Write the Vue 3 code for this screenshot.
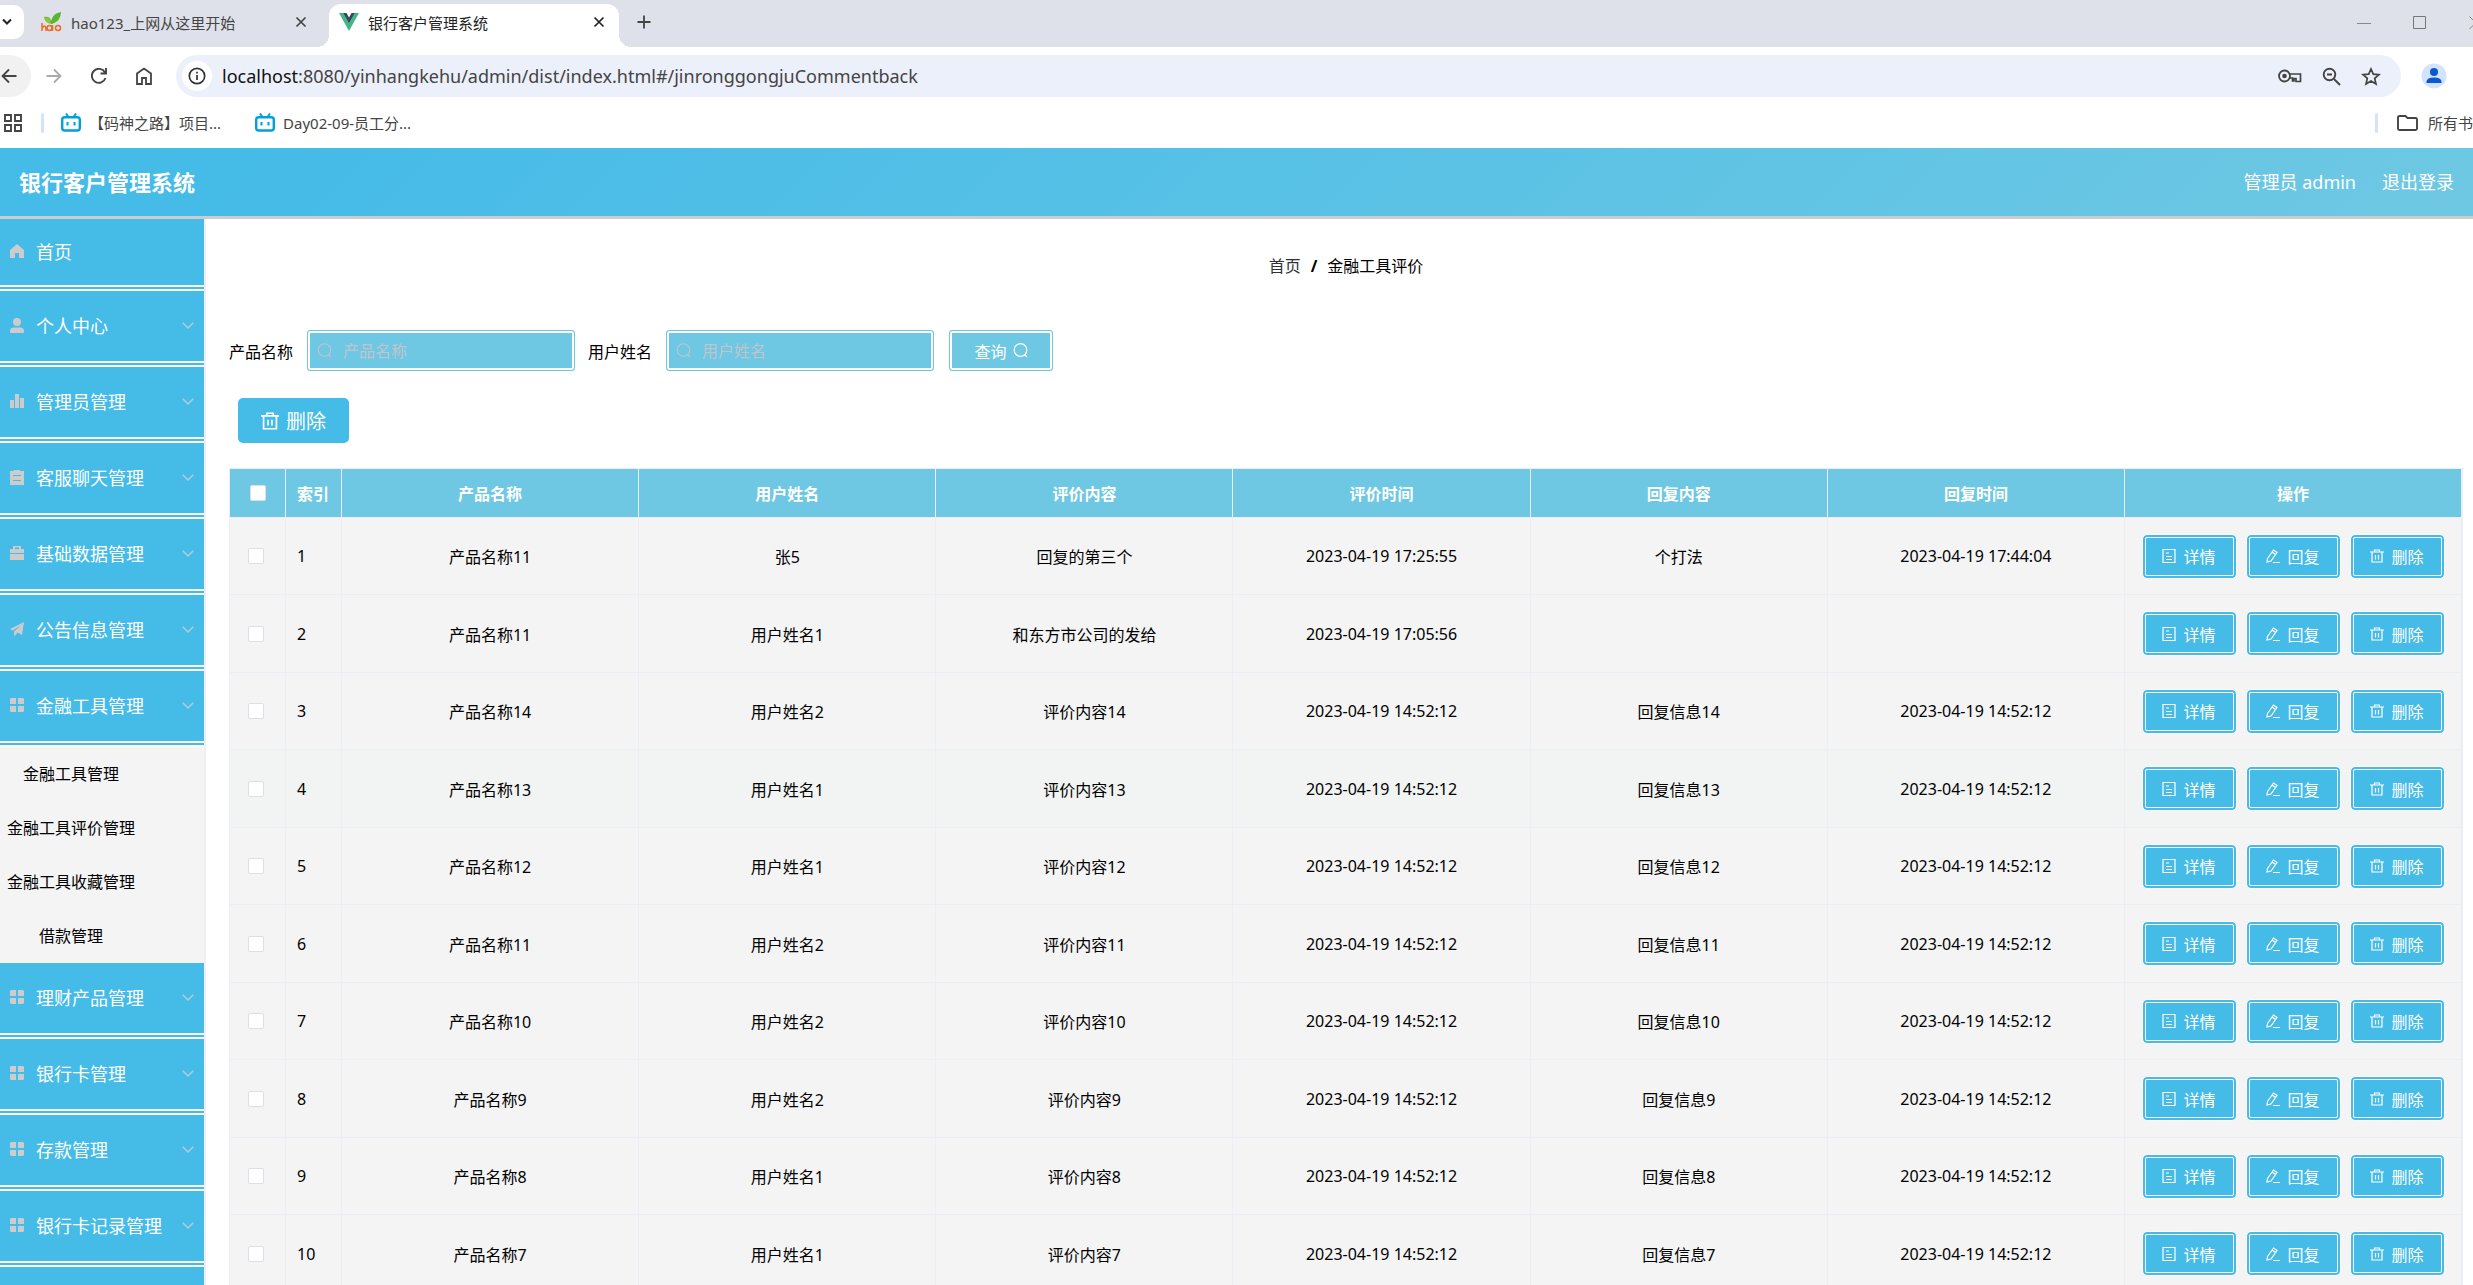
<script setup>
import { ref } from 'vue'

const menu = [
  { icon: 'home', label: '首页' },
  { icon: 'user', label: '个人中心', arrow: true },
  { icon: 'chart', label: '管理员管理', arrow: true },
  { icon: 'clipboard', label: '客服聊天管理', arrow: true },
  { icon: 'case', label: '基础数据管理', arrow: true },
  { icon: 'plane', label: '公告信息管理', arrow: true },
  {
    icon: 'grid',
    label: '金融工具管理',
    arrow: true,
    children: ['金融工具管理', '金融工具评价管理', '金融工具收藏管理', '借款管理']
  },
  { icon: 'grid', label: '理财产品管理', arrow: true },
  { icon: 'grid', label: '银行卡管理', arrow: true },
  { icon: 'grid', label: '存款管理', arrow: true },
  { icon: 'grid', label: '银行卡记录管理', arrow: true }
]

const menuIcons = {
  home: 'M7 0 14 6V14H9V9H5V14H0V6Z',
  user: 'M7 0a4 4 0 1 1 0 8a4 4 0 0 1 0-8ZM0 14V13Q0 9.500 4 9.500H10Q14 9.500 14 13V14Q14 15 13 15H1Q0 15 0 14Z',
  chart: 'M0 6H4V14H0ZM5 0H9V14H5ZM10 4H14V14H10Z',
  clipboard: 'M0 1H4V0H10V1H14V15H0ZM3 5V6H11V5ZM3 10V11H11V10Z',
  case: 'M3 3V0H11V3H14V7H0V3ZM5 3H9V1.500H5ZM0 8H14V14H0Z',
  plane: 'M14 0 12 13 7.500 10.500 4.500 14.500 4 9.500 11 3 3 8.500 0 7Z',
  grid: 'M1 0H6V6H0V1ZM8 0H13L14 1V6H8ZM0 8H6V14H1L0 13ZM8 8H14V13L13 14H8Z'
}

const columns = ['产品名称', '用户姓名', '评价内容', '评价时间', '回复内容', '回复时间']
const old = '2023-04-19 14:52:12'
const rows = [
  ['产品名称11', '张5', '回复的第三个', '2023-04-19 17:25:55', '个打法', '2023-04-19 17:44:04'],
  ['产品名称11', '用户姓名1', '和东方市公司的发给', '2023-04-19 17:05:56', '', ''],
  ['产品名称14', '用户姓名2', '评价内容14', old, '回复信息14', old],
  ['产品名称13', '用户姓名1', '评价内容13', old, '回复信息13', old],
  ['产品名称12', '用户姓名1', '评价内容12', old, '回复信息12', old],
  ['产品名称11', '用户姓名2', '评价内容11', old, '回复信息11', old],
  ['产品名称10', '用户姓名2', '评价内容10', old, '回复信息10', old],
  ['产品名称9', '用户姓名2', '评价内容9', old, '回复信息9', old],
  ['产品名称8', '用户姓名1', '评价内容8', old, '回复信息8', old],
  ['产品名称7', '用户姓名1', '评价内容7', old, '回复信息7', old]
]
const activeRow = 3

const actions = [
  { label: '详情', path: 'M1 0.500H13V13.500H1ZM4 4H7M4 7.500H10M4 10.500H10' },
  { label: '回复', path: 'M1.500 9.500 7.500 1 11 3.500 5 12 1 13ZM6 3 9.500 5.500M7 13.500H14' },
  { label: '删除', path: 'M0 3H14M4.500 3V1H9.500V3M2 3V13H12V3M5.500 6V10.500M8.500 6V10.500' }
]

const product = ref('')
const user = ref('')
</script>

<template>
  <div class="window">
    <div class="tabs">
      <button class="tab-search" aria-label="搜索标签页">
        <svg width="12" height="8" viewBox="0 0 12 8"><path d="M2 1.500 6 5.500 10 1.500" fill="none" stroke="#222" stroke-width="2" /></svg>
      </button>
      <div class="tab">
        <svg width="21" height="20" viewBox="0 0 21 20">
          <path d="M3 5Q9 4 10 9Q12 1 20 0Q20 9 11 12Q4 11 3 5Z" fill="#5ab531" />
          <path d="M3 5Q9 5 10 11Q5 11 3 5Z" fill="#8dc63f" />
          <path d="M1 11V19M1 16Q4 12 5 16V19M11 16a2.500 2.500 0 1 0-5 0a2.500 2.500 0 1 0 5 0M11.500 13V19M19.500 16a2.500 2.500 0 1 0-5 0a2.500 2.500 0 1 0 5 0" fill="none" stroke="#ee6b1f" stroke-width="1.500" />
        </svg>
        <span class="tab-title">hao123_上网从这里开始</span>
        <button class="close" aria-label="关闭">
          <svg width="12" height="12" viewBox="0 0 12 12"><path d="M1.500 1.500 10.500 10.500M10.500 1.500 1.500 10.500" stroke="#444" stroke-width="1.700" /></svg>
        </button>
      </div>
      <div class="tab active">
        <svg width="20" height="18" viewBox="0 0 20 18">
          <path d="M0 0H4L10 10.500 16 0H20L10 18Z" fill="#41b883" />
          <path d="M4 0H7.500L10 4.500 12.500 0H16L10 10.500Z" fill="#35495e" />
        </svg>
        <span class="tab-title">银行客户管理系统</span>
        <button class="close" aria-label="关闭">
          <svg width="12" height="12" viewBox="0 0 12 12"><path d="M1.500 1.500 10.500 10.500M10.500 1.500 1.500 10.500" stroke="#222" stroke-width="1.700" /></svg>
        </button>
      </div>
      <button class="new-tab" aria-label="新标签页">
        <svg width="14" height="14" viewBox="0 0 14 14"><path d="M7 0.500V13.500M0.500 7H13.500" stroke="#444" stroke-width="1.800" /></svg>
      </button>
      <div class="win-controls">
        <svg width="14" height="14" viewBox="0 0 14 14"><path d="M0 7.500H14" stroke="#888" /></svg>
        <svg width="14" height="14" viewBox="0 0 14 14"><path d="M0.500 0.500H12.500V12.500H0.500Z" fill="none" stroke="#777" /></svg>
        <svg width="14" height="14" viewBox="0 0 14 14"><path d="M0.500 0.500 13 13M13 0.500 0.500 13" stroke="#888" /></svg>
      </div>
    </div>

    <div class="toolbar">
      <button class="nav back" aria-label="后退">
        <svg width="16" height="16" viewBox="0 0 16 16"><path d="M15.500 8H2M8 1.500 1.500 8 8 14.500" fill="none" stroke="#444" stroke-width="1.800" /></svg>
      </button>
      <button class="nav" aria-label="前进">
        <svg width="16" height="16" viewBox="0 0 16 16"><path d="M0.500 8H14M8 1.500 14.500 8 8 14.500" fill="none" stroke="#aaa" stroke-width="1.800" /></svg>
      </button>
      <button class="nav" aria-label="刷新">
        <svg width="16" height="16" viewBox="0 0 16 16"><path d="M14 4.500A7 7 0 1 0 14.500 10M15 0V5.500H9.500" fill="none" stroke="#444" stroke-width="1.900" /></svg>
      </button>
      <button class="nav" aria-label="主页">
        <svg width="16" height="18" viewBox="0 0 16 18"><path d="M1 6.500 8 1.500 15 6.500V17H10V11H6V17H1Z" fill="none" stroke="#444" stroke-width="1.800" /></svg>
      </button>
      <div class="omnibox">
        <span class="site-info">
          <svg width="18" height="18" viewBox="0 0 18 18"><circle cx="9" cy="9" r="7.700" fill="none" stroke="#333" stroke-width="1.700" /><path d="M9 8V13M9 4.800V6.600" stroke="#333" stroke-width="1.700" /></svg>
        </span>
        <span class="url"><b>localhost</b>:8080/yinhangkehu/admin/dist/index.html#/jinronggongjuCommentback</span>
        <svg width="24" height="14" viewBox="0 0 24 14"><circle cx="6.500" cy="7" r="5.500" fill="none" stroke="#444" stroke-width="1.800" /><circle cx="6.500" cy="7" r="2.300" fill="#444" /><path d="M12 5H22.500V12.500H18V9.500H16V12H14.500V9H12" fill="none" stroke="#444" stroke-width="1.700" /></svg>
        <svg width="19" height="19" viewBox="0 0 19 19"><circle cx="7.500" cy="7.500" r="5.800" fill="none" stroke="#444" stroke-width="1.900" /><path d="M12 12 18 18M5 7.500H10" stroke="#444" stroke-width="1.900" /></svg>
        <svg width="20" height="19" viewBox="0 0 20 19"><path d="M10 2 12.300 7.200 18 7.700 13.700 11.400 15 17 10 14 5 17 6.300 11.400 2 7.700 7.700 7.200Z" fill="none" stroke="#444" stroke-width="1.700" /></svg>
      </div>
      <svg class="avatar" width="26" height="26" viewBox="0 0 26 26"><circle cx="13" cy="13" r="12.500" fill="#d3e3fd" /><circle cx="13" cy="9" r="4" fill="#0b57d0" /><path d="M5.500 20V18.500Q6 14.500 13 14.500T20.500 18.500V20Z" fill="#0b57d0" /></svg>
    </div>

    <div class="bookmarks">
      <svg width="18" height="18" viewBox="0 0 18 18"><path d="M1 1H7V7H1ZM11 1H17V7H11ZM1 11H7V17H1ZM11 11H17V17H11Z" fill="none" stroke="#444" stroke-width="1.900" /></svg>
      <i class="sep"></i>
      <a v-for="name in ['【码神之路】项目...', 'Day02-09-员工分...']" :key="name" href="#">
        <svg width="20" height="19" viewBox="0 0 20 19"><path d="M5 0.500 7.500 4M15 0.500 12.500 4" stroke="#00a1d6" stroke-width="2" /><rect x="1.200" y="4.200" width="17.600" height="13.300" rx="2.500" fill="#fff" stroke="#00a1d6" stroke-width="2.400" /><path d="M6.500 9V12.500M13.500 9V12.500" stroke="#00a1d6" stroke-width="2" /></svg>
        <span>{{ name }}</span>
      </a>
      <i class="sep right"></i>
      <a class="all" href="#">
        <svg width="21" height="16" viewBox="0 0 21 16"><path d="M1 2.500V13.500Q1 15 2.500 15H18.500Q20 15 20 13.500V4.500Q20 3 18.500 3H10.500L8.500 1H2.500Q1 1 1 2.500Z" fill="none" stroke="#444" stroke-width="1.900" /></svg>
        <span>所有书</span>
      </a>
    </div>

    <header class="app-header">
      <h1>银行客户管理系统</h1>
      <span>管理员 admin</span>
      <a href="#">退出登录</a>
    </header>

    <div class="body">
      <nav class="sidebar">
        <template v-for="item in menu" :key="item.label">
          <a class="menu-item" href="#">
            <svg width="14" height="15" viewBox="0 0 14 15"><path :d="menuIcons[item.icon]" fill="#ccc" fill-rule="evenodd" /></svg>
            <span>{{ item.label }}</span>
            <svg v-if="item.arrow" width="12" height="7" viewBox="0 0 12 7"><path d="M0.800 0.800 6 6 11.200 0.800" fill="none" stroke="#c0ccd4" stroke-width="1.300" /></svg>
          </a>
          <div v-if="item.children" class="submenu">
            <a v-for="child in item.children" :key="child" href="#">{{ child }}</a>
          </div>
        </template>
      </nav>

      <main>
        <div class="breadcrumb">
          <a href="#">首页</a><b>/</b><span>金融工具评价</span>
        </div>

        <form class="search" @submit.prevent>
          <label for="product">产品名称</label>
          <div class="field">
            <svg width="15" height="15" viewBox="0 0 15 15"><circle cx="7.500" cy="7" r="6.300" fill="none" stroke="#c0c4cc" stroke-width="1.100" /><path d="M11.500 11.500 14 14" stroke="#c0c4cc" stroke-width="1.100" /></svg>
            <input id="product" v-model="product" type="text" placeholder="产品名称" />
          </div>
          <label for="user">用户姓名</label>
          <div class="field">
            <svg width="15" height="15" viewBox="0 0 15 15"><circle cx="7.500" cy="7" r="6.300" fill="none" stroke="#c0c4cc" stroke-width="1.100" /><path d="M11.500 11.500 14 14" stroke="#c0c4cc" stroke-width="1.100" /></svg>
            <input id="user" v-model="user" type="text" placeholder="用户姓名" />
          </div>
          <button class="query" type="submit">
            <span>查询</span>
            <svg width="15" height="15" viewBox="0 0 15 15"><circle cx="7.500" cy="7" r="6.300" fill="none" stroke="#fff" stroke-width="1.200" /><path d="M11.500 11.500 14 14" stroke="#fff" stroke-width="1.200" /></svg>
          </button>
        </form>

        <button class="remove" type="button">
          <svg width="18" height="18" viewBox="0 0 14 14"><path :d="actions[2].path" fill="none" stroke="#fff" stroke-width="1.300" /></svg>
          <span>删除</span>
        </button>

        <table>
          <colgroup>
            <col class="narrow" />
            <col class="narrow" />
            <col v-for="c in columns" :key="c" />
            <col class="ops-col" />
          </colgroup>
          <thead>
            <tr>
              <th><input type="checkbox" aria-label="全选" /></th>
              <th class="index">索引</th>
              <th v-for="c in columns" :key="c">{{ c }}</th>
              <th>操作</th>
            </tr>
          </thead>
          <tbody>
            <tr v-for="(row, i) in rows" :key="i" :class="{ hover: i === activeRow }">
              <td class="pick"><input type="checkbox" :aria-label="'选择第' + (i + 1) + '行'" /></td>
              <td class="index">{{ i + 1 }}</td>
              <td v-for="(cell, j) in row" :key="j">{{ cell }}</td>
              <td>
                <div class="ops">
                  <button v-for="a in actions" :key="a.label" type="button">
                    <svg width="14" height="14" viewBox="0 0 14 14"><path :d="a.path" fill="none" stroke="#fff" stroke-width="1.200" /></svg>
                    <span>{{ a.label }}</span>
                  </button>
                </div>
              </td>
            </tr>
          </tbody>
        </table>
      </main>
    </div>
  </div>
</template>

<style>
body {
  background: #fff;
}
</style>

<style scoped>
* {
  box-sizing: border-box;
}
.window {
  display: flex;
  flex-direction: column;
  height: 100vh;
  overflow: hidden;
  font-family: "Noto Sans", "Noto Sans CJK SC", sans-serif;
  font-size: 16px;
  color: #000;
}
a {
  color: inherit;
  text-decoration: none;
}
button {
  border: 0;
  padding: 0;
  margin: 0;
  background: none;
  font-family: inherit;
  color: inherit;
  display: flex;
  align-items: center;
  justify-content: center;
}
svg {
  display: block;
  flex: none;
}

/* browser chrome */
.tabs {
  display: flex;
  align-items: center;
  flex: none;
  height: 47px;
  background: #dee1e9;
  font-size: 15px;
  color: #444;
}
.tab-search {
  width: 24px;
  height: 34px;
  margin-bottom: 3px;
  padding-right: 11px;
  border-radius: 0 10px 10px 0;
  background: #fff;
}
.tab {
  display: flex;
  align-items: center;
  width: 305px;
  height: 43px;
  padding: 0 22px 7px 17px;
  align-self: flex-end;
}
.tab.active {
  position: relative;
  width: 290px;
  padding: 0 14px 7px 10px;
  border-radius: 12px 12px 0 0;
  background: #fff;
  color: #222;
}
.tab.active::before,
.tab.active::after {
  content: "";
  position: absolute;
  bottom: 0;
  width: 12px;
  height: 12px;
}
.tab.active::before {
  right: 100%;
  background: radial-gradient(circle at 0 0, #dee1e9 12px, #fff 12px);
}
.tab.active::after {
  left: 100%;
  background: radial-gradient(circle at 100% 0, #dee1e9 12px, #fff 12px);
}
.tab-title {
  flex: 1;
  margin-left: 9px;
  white-space: nowrap;
}
.new-tab {
  width: 50px;
  height: 44px;
  padding-bottom: 3px;
}
.win-controls {
  display: flex;
  gap: 42px;
  margin-left: auto;
  margin-right: -10px;
  padding-bottom: 2px;
}
.toolbar {
  display: flex;
  align-items: center;
  flex: none;
  height: 58px;
}
.nav {
  flex: none;
  width: 45px;
  height: 42px;
}
.nav.back {
  width: 31px;
  border-radius: 0 21px 21px 0;
  background: #f1f1f1;
  padding-right: 14px;
}
.omnibox {
  display: flex;
  align-items: center;
  flex: 1;
  height: 42px;
  margin-left: 10px;
  padding: 0 20px 0 6px;
  border-radius: 21px;
  background: #ecf0fa;
  gap: 20px;
}
.site-info {
  display: flex;
  align-items: center;
  justify-content: center;
  width: 30px;
  height: 30px;
  border-radius: 50%;
  background: #fff;
}
.url {
  flex: 1;
  margin-left: -10px;
  font-size: 18px;
  color: #444;
}
.url b {
  font-weight: 400;
  color: #111;
}
.avatar {
  margin: 0 26px 0 20px;
}
.bookmarks {
  display: flex;
  align-items: center;
  flex: none;
  height: 43px;
  padding: 0 0 8px 4px;
  font-size: 15px;
  color: #444;
}
.bookmarks a {
  display: flex;
  align-items: center;
  gap: 8px;
  margin-right: 34px;
  white-space: nowrap;
}
.sep {
  width: 3px;
  height: 20px;
  margin: 0 17px 0 19px;
  border-radius: 2px;
  background: #d3e3fd;
}
.sep.right {
  margin-left: auto;
  margin-right: 19px;
}
.bookmarks .all {
  gap: 10px;
  margin-right: 0;
}

/* application header */
.app-header {
  display: flex;
  align-items: center;
  flex: none;
  height: 71px;
  padding: 0 19px 3px;
  border-bottom: 3px solid #ccc;
  background: linear-gradient(135deg, #45bbe8, #45bbe8 10%, #6ec8e3);
  color: #fff;
  font-size: 18px;
}
h1 {
  flex: 1;
  margin: 0;
  font-size: 22px;
  font-weight: 700;
}
.app-header a {
  margin-left: 26px;
}
.body {
  display: flex;
  flex: 1;
  min-height: 0;
}

/* sidebar */
.sidebar {
  flex: none;
  width: 206px;
  border-right: 2px solid #f1eff5;
  background: linear-gradient(#45bbe8, #45bbe8) content-box;
  overflow: hidden;
}
.menu-item {
  display: flex;
  align-items: center;
  height: 76px;
  padding: 0 10px 2px;
  border-bottom: 6px double #fff;
  background: #45bbe8;
  color: #fff;
  font-size: 18px;
}
.menu-item:first-child {
  height: 72px;
}
.menu-item span {
  flex: 1;
  margin-left: 12px;
}
.submenu {
  background: #f4f4f4;
}
.submenu a {
  display: block;
  height: 54px;
  padding-right: 62px;
  line-height: 54px;
  text-align: center;
}

/* content */
main {
  flex: 1;
  min-width: 0;
  padding: 35px 10px 0 23px;
}
.breadcrumb {
  display: flex;
  justify-content: center;
  gap: 10px;
  line-height: 24px;
}
.breadcrumb a {
  color: #303133;
}
.search {
  display: flex;
  align-items: center;
  margin-top: 52px;
}
.search label {
  margin-right: 14px;
}
.field {
  display: flex;
  align-items: center;
  width: 268px;
  height: 41px;
  margin-right: 13px;
  padding-left: 9px;
  border: 1px solid #6ec8e3;
  border-radius: 3px;
  background: #6ec8e3;
  box-shadow: inset 0 0 0 2px #fff;
}
.field input {
  flex: 1;
  min-width: 0;
  margin: 0 8px 0 11px;
  padding: 0;
  border: 0;
  outline: 0;
  background: transparent;
  font-family: inherit;
  font-size: 16px;
}
.field input::placeholder {
  color: #c0c4cc;
}
.query {
  width: 104px;
  height: 41px;
  margin-left: 2px;
  gap: 6px;
  border: 1px solid #6ec8e3;
  border-radius: 3px;
  background: #6ec8e3;
  box-shadow: inset 0 0 0 2px #fff;
  color: #fff;
  font-size: 16px;
}
.remove {
  width: 111px;
  height: 45px;
  margin: 27px 0 25px 9px;
  gap: 7px;
  border-radius: 5px;
  background: #45bbe8;
  color: #fff;
  font-size: 20px;
}
table {
  width: 100%;
  table-layout: fixed;
  border-collapse: separate;
  border-spacing: 0;
  border: 1px solid #ebeef5;
  border-width: 1px 1px 0 1px;
}
.narrow {
  width: 56px;
}
.ops-col {
  width: 337px;
}
th,
td {
  padding: 0;
  border-right: 1px solid #ebeef5;
  border-bottom: 1px solid #ebeef5;
  text-align: center;
}
th {
  height: 49px;
  background: #6ec8e3;
  color: #fff;
  font-weight: 700;
}
td {
  height: 77px;
  background: #f4f4f4;
}
tr:nth-child(even) td {
  height: 78px;
}
.hover td {
  background: #f1f4f3;
}
.index {
  padding-left: 11px;
  text-align: left;
}
.pick {
  padding-right: 4px;
}
input[type="checkbox"] {
  appearance: none;
  display: block;
  width: 16px;
  height: 16px;
  margin: 0 auto;
  border: 1px solid #dcdfe6;
  border-radius: 2px;
  background: #fff;
}
.ops {
  display: flex;
  justify-content: center;
  gap: 9px;
}
.ops button {
  width: 95px;
  height: 45px;
  gap: 7px;
  border: 1px solid #fff;
  border-radius: 5px;
  background: #45bbe8;
  box-shadow: inset 0 0 0 2px #45bbe8, inset 0 0 0 3px #fff;
  color: #fff;
  font-size: 16px;
}
</style>
